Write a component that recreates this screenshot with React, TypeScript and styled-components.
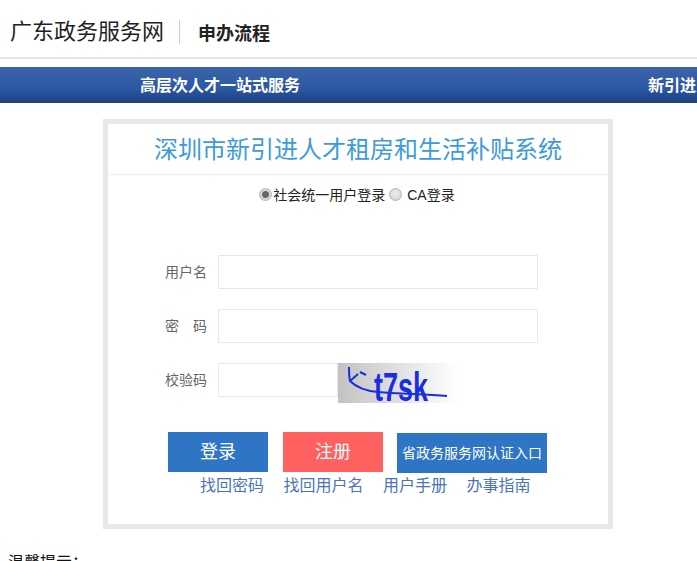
import React from "react";
import styled, { createGlobalStyle } from "styled-components";

const GlobalStyle = createGlobalStyle`
  html, body {
    margin: 0;
    padding: 0;
    height: 561px;
    overflow: hidden;
    background: #fff;
    font-family: "Liberation Sans", "Noto Sans CJK SC", sans-serif;
  }
  * {
    box-sizing: border-box;
  }
`;

const Header = styled.div`
  display: flex;
  align-items: center;
  height: 59px;
  padding: 6px 0 0 10px;
  border-bottom: 2px solid #e4e4e4;
`;

const SiteName = styled.div`
  font-size: 22px;
  line-height: 24px;
  color: #222;
  padding-right: 15px;
  border-right: 1px solid #ccc;
`;

const PageName = styled.div`
  font-size: 18px;
  font-weight: bold;
  color: #222;
  margin-left: 18px;
`;

const NavBar = styled.div`
  display: flex;
  gap: 348px;
  height: 36px;
  margin-top: 8px;
  padding-left: 140px;
  overflow: hidden;
  white-space: nowrap;
  background: linear-gradient(#3d64a8 0%, #2a58a6 60%, #1f3f7c 100%);
`;

const NavItem = styled.div`
  font-size: 16px;
  font-weight: bold;
  line-height: 38px;
  color: #fff;
`;

const Card = styled.div`
  width: 510px;
  height: 410px;
  margin: 16px 0 0 103px;
  border: 5px solid #e8e8e8;
`;

const Title = styled.div`
  height: 51px;
  font-size: 24px;
  line-height: 52px;
  text-align: center;
  color: #3c9bd8;
  border-bottom: 1px solid #eee;
`;

const LoginType = styled.div`
  display: flex;
  justify-content: center;
  align-items: center;
  height: 38px;
  padding-left: 2px;
  font-size: 14px;
  color: #222;
`;

const Radio = styled.input.attrs({ type: "radio", readOnly: true })`
  appearance: none;
  width: 13px;
  height: 13px;
  margin: 0 1px 0 0;
  border: 1px solid #b4b4b4;
  border-radius: 50%;
  background: radial-gradient(circle at 50% 40%, #ececec, #cfcfcf);

  &:checked {
    background: radial-gradient(circle, #666 0 3px, #d8d8d8 4px);
  }
`;

const RadioText = styled.label`
  margin-right: 4px;
`;

const Form = styled.div`
  display: flex;
  flex-direction: column;
  gap: 20px;
  margin-top: 42px;
`;

const Row = styled.div`
  display: flex;
  align-items: flex-start;
  height: 34px;
`;

const Label = styled.label`
  width: 99px;
  margin-right: 11px;
  font-size: 14px;
  line-height: 34px;
  text-align: right;
  color: #666;
  white-space: pre;
`;

const TextInput = styled.input<{ $width: number }>`
  width: ${(p) => p.$width}px;
  height: 34px;
  padding: 0 8px;
  border: 1px solid #e8e8e8;
  outline: none;
  background: #fff;
`;

const Captcha = styled.svg`
  display: block;
  flex: none;
`;

const Buttons = styled.div`
  display: flex;
  align-items: flex-start;
  margin: 35px 0 0 60px;
`;

const Button = styled.div<{ $color: string; $width: number; $size: number; $gap: number; $top: number }>`
  width: ${(p) => p.$width}px;
  height: 40px;
  margin-right: ${(p) => p.$gap}px;
  margin-top: ${(p) => p.$top}px;
  font-size: ${(p) => p.$size}px;
  line-height: 40px;
  text-align: center;
  white-space: nowrap;
  color: #fff;
  background: ${(p) => p.$color};
`;

const Links = styled.div`
  display: flex;
  gap: 19.5px;
  margin: 2px 0 0 92px;
`;

const Link = styled.a`
  font-size: 16px;
  line-height: 22px;
  color: #4a74b9;
  text-decoration: none;
`;

const Tips = styled.div`
  margin: 24px 0 0 8px;
  font-size: 16px;
  line-height: 20px;
  color: #111;
`;

export default function App() {
  return (
    <>
      <GlobalStyle />
      <Header>
        <SiteName>广东政务服务网</SiteName>
        <PageName>申办流程</PageName>
      </Header>
      <NavBar>
        <NavItem>高层次人才一站式服务</NavItem>
        <NavItem>新引进人才租房和生活补贴</NavItem>
      </NavBar>
      <Card>
        <Title>深圳市新引进人才租房和生活补贴系统</Title>
        <LoginType>
          <Radio name="loginType" defaultChecked />
          <RadioText>社会统一用户登录</RadioText>
          <Radio name="loginType" />
          <RadioText>&nbsp;CA登录</RadioText>
        </LoginType>
        <Form>
          <Row>
            <Label>用户名</Label>
            <TextInput $width={320} />
          </Row>
          <Row>
            <Label>{"密\u3000码"}</Label>
            <TextInput $width={320} type="password" />
          </Row>
          <Row>
            <Label>校验码</Label>
            <TextInput $width={120} />
            <Captcha width="120" height="40" viewBox="0 0 120 40">
              <defs>
                <linearGradient id="captchaBg" x1="0" x2="1" y1="0" y2="0">
                  <stop offset="0" stopColor="#c2c2c2" />
                  <stop offset="1" stopColor="#ffffff" />
                </linearGradient>
              </defs>
              <rect width="120" height="40" fill="url(#captchaBg)" />
              <text
                x="36"
                y="38"
                fontFamily="'Liberation Sans', sans-serif"
                fontSize="40"
                fontWeight="bold"
                fill="#1a2ee0"
                textLength="54"
                lengthAdjust="spacingAndGlyphs"
              >
                t7sk
              </text>
              <path
                d="M11 4 C11 10 11 14 12 18 C18 24 28 28 40 29 C60 31 85 31 109 33 M12 18 L20 11 M22 9 L28 12"
                fill="none"
                stroke="#1a2ee0"
                strokeWidth="2"
              />
            </Captcha>
          </Row>
        </Form>
        <Buttons>
          <Button $color="#2e75c6" $width={100} $size={18} $gap={15} $top={0}>
            登录
          </Button>
          <Button $color="#ff6060" $width={100} $size={18} $gap={14} $top={0}>
            注册
          </Button>
          <Button $color="#2e75c6" $width={150} $size={14} $gap={0} $top={1}>
            省政务服务网认证入口
          </Button>
        </Buttons>
        <Links>
          <Link>找回密码</Link>
          <Link>找回用户名</Link>
          <Link>用户手册</Link>
          <Link>办事指南</Link>
        </Links>
      </Card>
      <Tips>温馨提示：</Tips>
    </>
  );
}
